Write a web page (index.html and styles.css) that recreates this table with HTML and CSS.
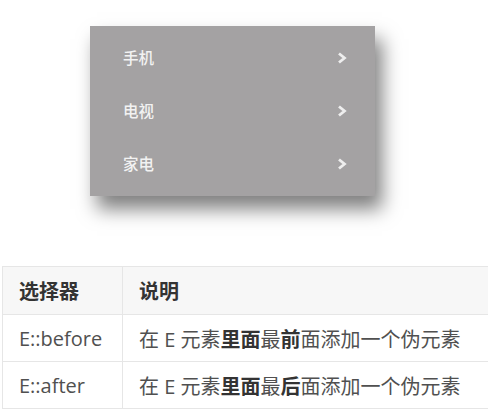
FILE: index.html
```html
<!DOCTYPE html>
<html lang="zh">
<head>
    <meta charset="UTF-8">
    <title>伪元素</title>
    <link rel="stylesheet" href="styles.css">
</head>
<body>

    <div class="menu">
        <div class="menu-item">
            <span>手机</span>
            <svg class="arrow" width="10" height="12" viewBox="0 0 10 12"><path d="M2 1.5 L7.5 6 L2 10.5" /></svg>
        </div>
        <div class="menu-item">
            <span>电视</span>
            <svg class="arrow" width="10" height="12" viewBox="0 0 10 12"><path d="M2 1.5 L7.5 6 L2 10.5" /></svg>
        </div>
        <div class="menu-item">
            <span>家电</span>
            <svg class="arrow" width="10" height="12" viewBox="0 0 10 12"><path d="M2 1.5 L7.5 6 L2 10.5" /></svg>
        </div>
    </div>

    <table class="info">
        <thead>
            <tr>
                <th class="col-sel">选择器</th>
                <th>说明</th>
            </tr>
        </thead>
        <tbody>
            <tr>
                <td>E::before</td>
                <td>在 E 元素<b>里面</b>最<b>前</b>面添加一个伪元素</td>
            </tr>
            <tr>
                <td>E::after</td>
                <td>在 E 元素<b>里面</b>最<b>后</b>面添加一个伪元素</td>
            </tr>
        </tbody>
    </table>

</body>
</html>
```

FILE: styles.css
```css
html, body {
    margin: 0;
    padding: 0;
    background-color: #fff;
    overflow: hidden;
}

body {
    font-family: "Open Sans", "Noto Sans CJK SC", sans-serif;
    width: 488px;
    height: 410px;
}

/* floating menu */
.menu {
    width: 285px;
    height: 170px;
    box-sizing: border-box;
    margin: 26px 0 0 90px;
    padding: 5px 0;
    background-color: #a4a2a3;
    box-shadow: 7px 13px 18px rgba(0, 0, 0, 0.5);
}

.menu-item {
    height: 53px;
    display: flex;
    align-items: center;
    justify-content: space-between;
    padding: 0 28px 0 33px;
    color: #f2f2f2;
    font-size: 15.5px;
    font-weight: 500;
}

.arrow path {
    fill: none;
    stroke: #eeeeee;
    stroke-width: 2.8;
}

/* table */
.info {
    margin: 70px 0 0 2px;
    width: 500px;
    border-collapse: collapse;
    font-size: 20px;
    color: #505050;
}

.info th,
.info td {
    border: 1px solid #e6e6e6;
    text-align: left;
    padding: 0 16px;
}

.info th {
    height: 47px;
    background-color: #f7f7f7;
    color: #333;
    font-weight: bold;
}

.info td {
    height: 46px;
}

.info td b {
    color: #333;
}

.col-sel {
    width: 87px;
}
```
